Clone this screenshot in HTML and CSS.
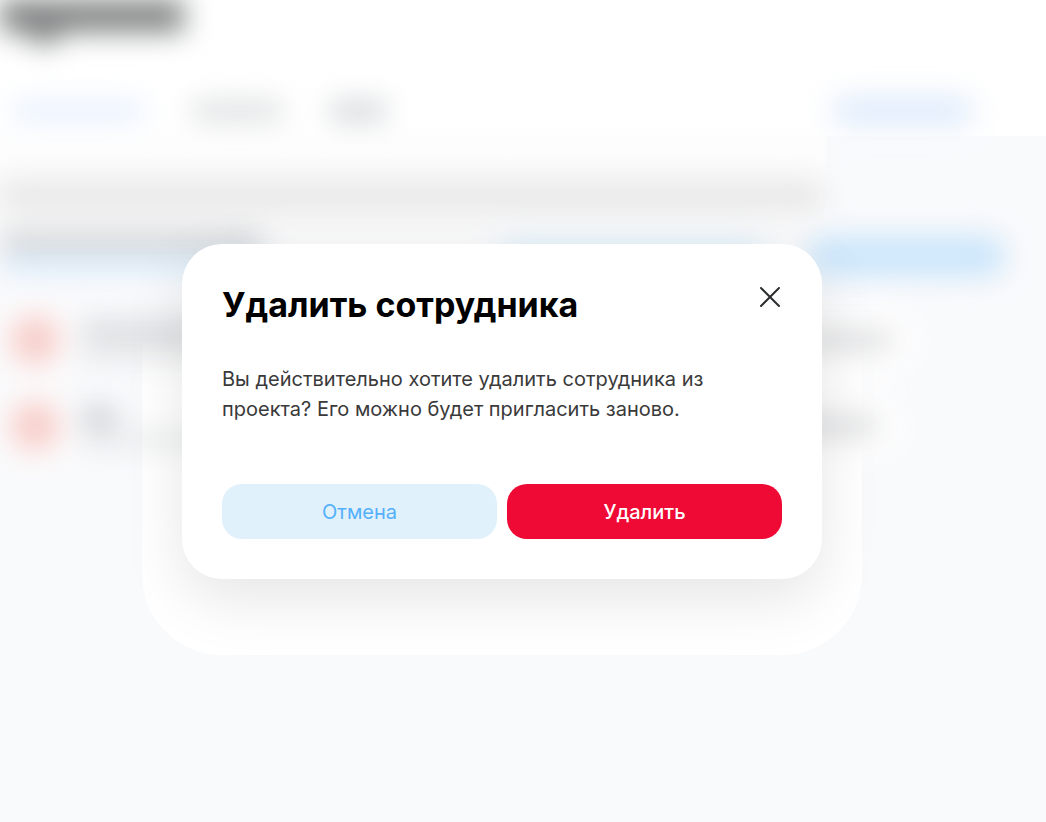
FILE: index.html
```html
<!DOCTYPE html>
<html lang="ru">
<head>
  <meta charset="UTF-8">
  <meta name="viewport" content="width=device-width, initial-scale=1.0">
  <title>Удалить сотрудника</title>
  <link rel="stylesheet" href="styles.css">
</head>
<body>
  <!-- Blurred page under the dialog -->
  <div class="page" aria-hidden="true">
    <div class="page-title"></div>

    <div class="tabs">
      <div class="bar tab tab-active"></div>
      <div class="bar tab"></div>
      <div class="bar tab tab-short"></div>
      <div class="bar tab-link"></div>
    </div>

    <div class="bar description"></div>

    <div class="toolbar">
      <div class="toolbar-title">
        <div class="bar subtitle"></div>
        <div class="bar underline"></div>
      </div>
      <div class="bar search"></div>
      <div class="bar action"></div>
    </div>

    <div class="person">
      <div class="avatar"></div>
      <div class="person-info">
        <div class="bar name"></div>
        <div class="bar email"></div>
      </div>
      <div class="bar role"></div>
    </div>
    <div class="person">
      <div class="avatar"></div>
      <div class="person-info">
        <div class="bar name name-short"></div>
        <div class="bar email"></div>
      </div>
      <div class="bar role role-short"></div>
    </div>
  </div>

  <div class="modal-wrap">
    <div class="modal" role="dialog" aria-modal="true" aria-labelledby="modal-title">
      <div class="modal-header">
        <h1 id="modal-title">Удалить сотрудника</h1>
        <button class="close" type="button" aria-label="Закрыть">
          <svg width="24" height="26" viewBox="0 0 24 26" fill="none" stroke="#2b2d2e" stroke-width="2" stroke-linecap="round">
            <path d="M3 4L21 22M21 4L3 22"/>
          </svg>
        </button>
      </div>
      <p class="modal-text">Вы действительно хотите удалить сотрудника из проекта? Его можно будет пригласить заново.</p>
      <div class="modal-actions">
        <button class="btn btn-cancel" type="button">Отмена</button>
        <button class="btn btn-delete" type="button">Удалить</button>
      </div>
    </div>
  </div>
</body>
</html>
```
FILE: styles.css
```css
* {
  box-sizing: border-box;
}
body {
  margin: 0;
  min-height: 100vh;
  display: grid;
  grid-template-columns: minmax(0, 1fr);
  overflow: hidden;
  font-family: Inter, "Liberation Sans", sans-serif;
  background:
    linear-gradient(#ffffff 120px, #fafafa 190px, #f9fafc 300px) no-repeat 0 0 / 79% 300px,
    linear-gradient(#ffffff 136px, #f9fafc 136px);
}

/* Page behind the dialog */
.page {
  grid-area: 1 / 1;
  padding-right: 42px;
  filter: blur(14px);
}
.bar {
  height: 20px;
  border-radius: 10px;
  background: #dcdedf;
}
.page-title {
  width: 184px;
  height: 46px;
  background:
    radial-gradient(circle at 44px 24px, #7f8282 20px, transparent 21px),
    linear-gradient(#7f8282 32px, transparent 32px);
}
.tabs {
  display: flex;
  align-items: center;
  gap: 44px;
  margin-top: 52px;
  padding: 0 34px 0 10px;
  height: 26px;
}
.tab {
  width: 94px;
}
.tab-active {
  width: 136px;
  background: #e6f0fe;
}
.tab-short {
  width: 60px;
  background: #d2d5d8;
}
.tab-link {
  width: 134px;
  margin-left: auto;
  background: #d7e8fc;
  box-shadow: 0 0 0 16px #fafbfd;
}
.description {
  width: 82%;
  height: 28px;
  margin-top: 58px;
  background: #e6e6e6;
}
.toolbar {
  display: flex;
  align-items: flex-start;
  gap: 44px;
  margin-top: 22px;
}
.toolbar-title {
  flex: 1;
}
.subtitle {
  width: 264px;
  background: #cfd1d3;
}
.underline {
  width: 264px;
  margin-top: 4px;
  height: 16px;
  background: #d6ebfd;
}
.search {
  width: 264px;
  height: 40px;
  margin-top: 8px;
  background: #deeffa;
}
.action {
  width: 196px;
  height: 40px;
  margin-top: 4px;
  border-radius: 16px;
  background: #cae5fa;
}
.person {
  display: flex;
  align-items: center;
  gap: 20px;
  height: 86px;
  padding: 0 110px 0 10px;
}
.toolbar + .person {
  margin-top: 17px;
}
.avatar {
  width: 50px;
  height: 50px;
  border-radius: 50%;
  background: #f6cdc9;
  box-shadow: 0 0 0 14px #fefcfc;
}
.person-info {
  flex: 1;
}
.name {
  width: 130px;
  background: #d6d9db;
}
.name-short {
  width: 38px;
  background: #c6cace;
}
.email {
  width: 150px;
  height: 10px;
  margin-top: 8px;
  background: #dddfe0;
}
.role {
  width: 90px;
  background: #dddee0;
  box-shadow: 0 0 0 24px #fefefe;
}
.role-short {
  margin-right: 14px;
}

/* Dialog */
.modal-wrap {
  grid-area: 1 / 1;
  display: flex;
  align-items: center;
  justify-content: center;
  padding: 20px 62px 20px 20px;
}
.modal {
  position: relative;
  width: 100%;
  max-width: 640px;
  padding: 40px;
  border-radius: 40px;
  background: #ffffff;
  box-shadow: 0 20px 60px rgba(0, 0, 0, 0.1);
}
/* soft light edge under the shadow */
.modal::before {
  content: "";
  position: absolute;
  inset: 100px -40px -76px;
  z-index: -1;
  border-radius: 0 0 80px 80px;
  background: #ffffff;
}
.modal-header {
  display: flex;
  align-items: flex-start;
  justify-content: space-between;
  gap: 20px;
}
h1 {
  margin: 0;
  font-size: 34px;
  line-height: 42px;
  font-weight: 700;
  color: #000000;
}
.close {
  display: flex;
  padding: 0;
  border: none;
  background: none;
  cursor: pointer;
}
.modal-text {
  margin: 38px 0 60px;
  font-size: 20px;
  line-height: 30px;
  color: #3a3a3a;
}
.modal-actions {
  display: flex;
  gap: 10px;
}
.btn {
  flex: 1;
  height: 55px;
  padding: 2px 10px 0;
  border: none;
  border-radius: 20px;
  font-family: inherit;
  font-size: 20px;
  font-weight: 500;
  cursor: pointer;
}
.btn-cancel {
  background: #e0f1fc;
  color: #54b0fb;
  font-weight: 400;
}
.btn-delete {
  background: #ee0a34;
  color: #ffffff;
}
```
